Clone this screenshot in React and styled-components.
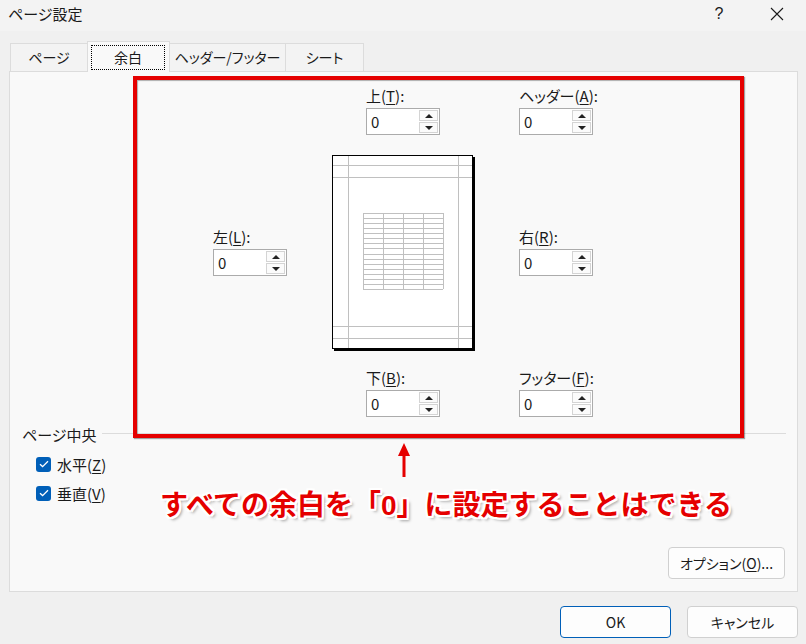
import styled, { createGlobalStyle } from "styled-components"

const GlobalStyle = createGlobalStyle`
    * { box-sizing: border-box; }
    body {
        margin: 0;
        font-family: "Noto Sans CJK JP", "Noto Sans", sans-serif;
        font-feature-settings: "palt";
        color: #1a1a1a;
    }
`

const tabs = [
    { label: "ページ", width: 78 },
    { label: "余白", width: 83, active: true },
    { label: "ヘッダー/フッター", width: 117 },
    { label: "シート", width: 79 },
]

function SpinField({ label, hotkey }) {
    return (
        <Field>
            <FieldLabel>
                {label}(<u>{hotkey}</u>):
            </FieldLabel>
            <SpinBox>
                <SpinValue>0</SpinValue>
                <Spinner>
                    <SpinButton><Triangle $up /></SpinButton>
                    <SpinButton><Triangle /></SpinButton>
                </Spinner>
            </SpinBox>
        </Field>
    )
}

function PagePreview() {
    const rows = Array.from({ length: 16 }, (_, i) => 58 + i * 5.07)
    const cols = [31, 51, 71, 91, 111]
    return (
        <Preview width="143" height="196" viewBox="0 0 143 196">
            <rect x="2" y="2" width="141" height="194" fill="#000" />
            <rect x="0.5" y="0.5" width="140" height="193" fill="#fff" stroke="#000" />
            <g stroke="#c0c0c0" strokeWidth="1" shapeRendering="crispEdges">
                <line x1="16.5" y1="1" x2="16.5" y2="193" />
                <line x1="126.5" y1="1" x2="126.5" y2="193" />
                {[10.5, 22.5, 171.5, 183.5].map((y) => (
                    <line key={y} x1="1" y1={y} x2="140" y2={y} />
                ))}
                {rows.map((y) => (
                    <line key={y} x1="31" y1={Math.round(y) + 0.5} x2="111" y2={Math.round(y) + 0.5} />
                ))}
                {cols.map((x) => (
                    <line key={x} x1={x + 0.5} y1="58" x2={x + 0.5} y2="134" />
                ))}
            </g>
        </Preview>
    )
}

function CheckItem({ label, hotkey }) {
    return (
        <CheckRow>
            <CheckBox>
                <svg width="10" height="8" viewBox="0 0 10 8">
                    <path d="M1 4.2 L3.6 6.6 L9 1.2" fill="none" stroke="#fff" strokeWidth="1.3" />
                </svg>
            </CheckBox>
            <span>
                {label}(<u>{hotkey}</u>)
            </span>
        </CheckRow>
    )
}

function App() {
    return (
        <Window>
            <GlobalStyle />
            <TitleBar>
                <Title>ページ設定</Title>
                <TitleButton>?</TitleButton>
                <TitleButton>
                    <svg width="14" height="14" viewBox="0 0 14 14">
                        <path d="M1 1 L13 13 M13 1 L1 13" stroke="#1a1a1a" strokeWidth="1.1" />
                    </svg>
                </TitleButton>
            </TitleBar>
            <Body>
                <TabRow>
                    {tabs.map((t) => (
                        <Tab key={t.label} $width={t.width} $active={t.active}>
                            <TabInner $active={t.active}>{t.label}</TabInner>
                        </Tab>
                    ))}
                </TabRow>
                <Panel>
                    <MarginArea>
                        <LeftCol>
                            <SpinField label="左" hotkey="L" />
                        </LeftCol>
                        <MidCol>
                            <Indented>
                                <SpinField label="上" hotkey="T" />
                            </Indented>
                            <PagePreview />
                            <Indented $bottom>
                                <SpinField label="下" hotkey="B" />
                            </Indented>
                        </MidCol>
                        <RightCol>
                            <SpinField label="ヘッダー" hotkey="A" />
                            <SpinField label="右" hotkey="R" />
                            <SpinField label="フッター" hotkey="F" />
                        </RightCol>
                    </MarginArea>
                    <GroupHeader>
                        <span>ページ中央</span>
                        <GroupLine />
                    </GroupHeader>
                    <CheckList>
                        <CheckItem label="水平" hotkey="Z" />
                        <CheckItem label="垂直" hotkey="V" />
                    </CheckList>
                    <PanelFooter>
                        <Button $width={117} $height={32}>
                            オプション(<u>O</u>)...
                        </Button>
                    </PanelFooter>
                </Panel>
                <Footer>
                    <Button $width={111} $height={32} $primary>OK</Button>
                    <Button $width={111} $height={32}>キャンセル</Button>
                </Footer>
            </Body>
            <RedBox />
            <Arrow width="14" height="34" viewBox="0 0 14 34">
                <polygon points="7,0 13,13 1,13" fill="#e50000" />
                <rect x="5.5" y="12" width="3" height="22" fill="#e50000" />
            </Arrow>
            <Annotation>すべての余白を「<Zero>0</Zero>」に設定することはできる</Annotation>
        </Window>
    )
}

export default App

const Window = styled.div`
    position: relative;
    width: 806px;
    height: 644px;
    background-color: #f0f0f0;
    display: flex;
    flex-direction: column;
    font-size: 15px;
    overflow: hidden;

    u {
        text-decoration: underline;
        text-underline-offset: 2px;
        text-decoration-thickness: 1px;
    }
`

const TitleBar = styled.div`
    height: 31px;
    background-color: #f3f3f3;
    display: flex;
    align-items: center;
    padding: 0 0 4px 8px;
`

const Title = styled.div`
    flex: 1;
    font-size: 15px;
`

const TitleButton = styled.div`
    width: 58px;
    display: flex;
    justify-content: center;
    font-size: 16px;
    font-family: "Liberation Sans", sans-serif;
`

const Body = styled.div`
    flex: 1;
    display: flex;
    flex-direction: column;
    padding: 10px 8px 0 9px;
`

const TabRow = styled.div`
    height: 30px;
    display: flex;
    align-items: flex-end;
    padding-left: 1px;
`

const Tab = styled.div`
    width: ${(p) => p.$width}px;
    height: ${(p) => (p.$active ? 31 : 28)}px;
    margin-bottom: ${(p) => (p.$active ? -1 : 0)}px;
    border: 1px solid #dcdcdc;
    border-bottom: none;
    margin-right: -1px;
    background-color: ${(p) => (p.$active ? "#f9f9f9" : "#f3f3f3")};
    position: relative;
    z-index: ${(p) => (p.$active ? 1 : 0)};
    display: flex;
    padding: ${(p) => (p.$active ? "3px 4px 2px 3px" : "0")};
`

const TabInner = styled.div`
    flex: 1;
    display: flex;
    align-items: center;
    justify-content: center;
    font-size: 14px;
    white-space: nowrap;
    border: 1px dotted ${(p) => (p.$active ? "#000" : "transparent")};
    padding-bottom: 1px;
`

const Panel = styled.div`
    height: 521px;
    background-color: #f9f9f9;
    border: 1px solid #dcdcdc;
    display: flex;
    flex-direction: column;
`

const MarginArea = styled.div`
    display: flex;
    padding: 15px 0 0 203px;
`

const LeftCol = styled.div`
    width: 119px;
    padding-top: 141px;
`

const MidCol = styled.div`
    width: 143px;
    display: flex;
    flex-direction: column;
`

const Indented = styled.div`
    padding-left: 34px;
    margin-bottom: ${(p) => (p.$bottom ? 0 : 20)}px;
    margin-top: ${(p) => (p.$bottom ? 18 : 0)}px;
`

const RightCol = styled.div`
    margin-left: 44px;
    display: flex;
    flex-direction: column;
    gap: 93px;
`

const Field = styled.div`
    display: flex;
    flex-direction: column;
`

const FieldLabel = styled.div`
    height: 21px;
    line-height: 17px;
    font-size: 15px;
`

const SpinBox = styled.div`
    width: 74px;
    height: 27px;
    border: 1px solid #ababab;
    background-color: #fff;
    display: flex;
`

const SpinValue = styled.div`
    flex: 1;
    padding-left: 4px;
    line-height: 25px;
    font-size: 15px;
`

const Spinner = styled.div`
    width: 19px;
    margin: 1px 1px 1px 0;
    display: flex;
    flex-direction: column;
    gap: 1px;
`

const SpinButton = styled.div`
    flex: 1;
    border: 1px solid #d4d4d4;
    background-color: #fbfbfb;
    display: flex;
    align-items: center;
    justify-content: center;
`

const Triangle = styled.div`
    width: 0;
    height: 0;
    border-left: 4px solid transparent;
    border-right: 4px solid transparent;
    ${(p) => (p.$up ? "border-bottom: 4px solid #222;" : "border-top: 4px solid #222;")}
`

const Preview = styled.svg`
    display: block;
`

const GroupHeader = styled.div`
    display: flex;
    align-items: center;
    margin-top: 7px;
    padding: 0 11px 0 12px;
    height: 20px;
    font-size: 15px;

    span {
        margin-right: 6px;
    }
`

const GroupLine = styled.div`
    flex: 1;
    height: 1px;
    background-color: #dcdcdc;
    margin-top: -1px;
`

const CheckList = styled.div`
    display: flex;
    flex-direction: column;
    gap: 9px;
    margin-top: 10px;
    padding-left: 26px;
`

const CheckRow = styled.div`
    height: 20px;
    display: flex;
    align-items: center;
    gap: 6px;
    font-size: 15px;
`

const CheckBox = styled.div`
    width: 15px;
    height: 15px;
    border-radius: 3px;
    background-color: #005fb8;
    display: flex;
    align-items: center;
    justify-content: center;
`

const PanelFooter = styled.div`
    margin-top: auto;
    display: flex;
    justify-content: flex-end;
    padding: 0 12px 12px 0;
`

const Button = styled.div`
    width: ${(p) => p.$width}px;
    height: ${(p) => p.$height}px;
    border: 1px solid ${(p) => (p.$primary ? "#005fb8" : "#d0d0d0")};
    border-radius: 4px;
    background-color: #fdfdfd;
    display: flex;
    align-items: center;
    justify-content: center;
    font-size: 14px;
`

const Footer = styled.div`
    display: flex;
    justify-content: flex-end;
    gap: 16px;
    padding: 14px 0 6px 0;
`

const RedBox = styled.div`
    position: absolute;
    left: 133px;
    top: 76px;
    width: 611px;
    height: 362px;
    border: 4px solid #e50000;
    box-shadow: 1px 1px 1px rgba(0, 0, 0, 0.35), inset 1px 1px 1px rgba(0, 0, 0, 0.3);
    pointer-events: none;
`

const Arrow = styled.svg`
    position: absolute;
    left: 397px;
    top: 443px;
`

const Annotation = styled.div`
    position: absolute;
    left: 160px;
    top: 484px;
    font-size: 28px;
    line-height: 38px;
    font-weight: 700;
    font-feature-settings: normal;
    color: #e50000;
    white-space: nowrap;
    text-shadow:
        -2px 0 #fff, 2px 0 #fff, 0 -2px #fff, 0 2px #fff,
        -2px -2px #fff, 2px 2px #fff, -2px 2px #fff, 2px -2px #fff,
        3px 3px 3px rgba(0, 0, 0, 0.35);
`

const Zero = styled.span`
    font-family: "Liberation Sans", sans-serif;
    font-weight: 700;
`
